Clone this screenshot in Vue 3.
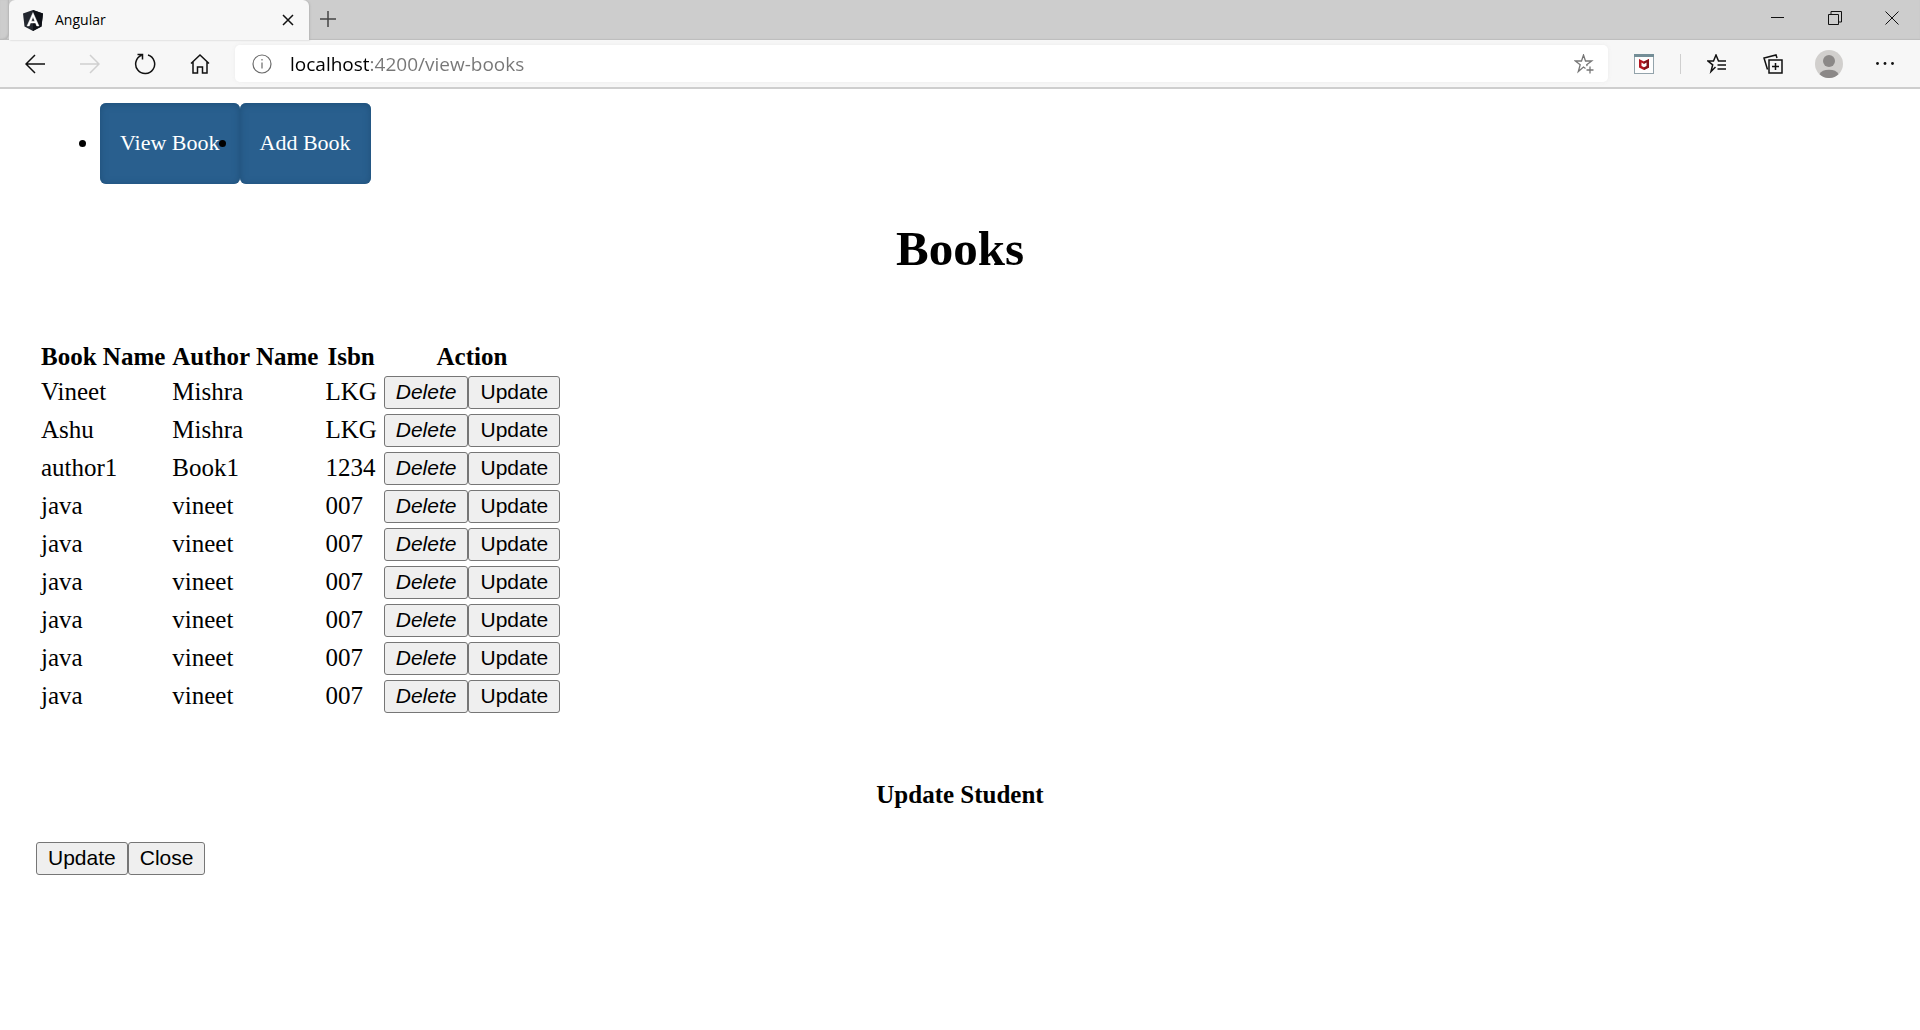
<script setup>
import { ref } from 'vue'

const address = ref('localhost:4200/view-books')

const books = ref([
  { name: 'Vineet', author: 'Mishra', isbn: 'LKG' },
  { name: 'Ashu', author: 'Mishra', isbn: 'LKG' },
  { name: 'author1', author: 'Book1', isbn: '1234' },
  { name: 'java', author: 'vineet', isbn: '007' },
  { name: 'java', author: 'vineet', isbn: '007' },
  { name: 'java', author: 'vineet', isbn: '007' },
  { name: 'java', author: 'vineet', isbn: '007' },
  { name: 'java', author: 'vineet', isbn: '007' },
  { name: 'java', author: 'vineet', isbn: '007' },
])
</script>

<template>
  <div class="window">
    <header class="chrome">
      <div class="tab-strip">
        <div class="tab-edge"></div>
        <div class="tab">
          <svg class="favicon" width="20" height="21" viewBox="0 0 20 21">
            <path d="M10 0 0 3.500 1.500 16.500 10 21l8.500-4.500L20 3.500z" fill="#23272f" />
            <path d="M10 0v21l8.500-4.500L20 3.500z" fill="#0d1016" />
            <path d="M10 2.500 4 16h2.300l1.200-3h5l1.200 3H16zM10 7l1.700 4.200H8.300z" fill="#fff" stroke="#fff" stroke-width=".4" fill-rule="evenodd" />
          </svg>
          <span class="tab-title">Angular</span>
          <button class="tab-close" aria-label="Close tab">
            <svg width="12" height="12" viewBox="0 0 12 12"><path d="M1 1l10 10M11 1 1 11" /></svg>
          </button>
        </div>
        <button class="new-tab" aria-label="New tab">
          <svg width="16" height="16" viewBox="0 0 16 16"><path d="M8 0v16M0 8h16" /></svg>
        </button>
        <div class="window-controls">
          <button aria-label="Minimize">
            <svg width="14" height="14" viewBox="0 0 14 14"><path d="M0 6.500h13" /></svg>
          </button>
          <button aria-label="Restore">
            <svg width="14" height="14" viewBox="0 0 14 14"><path d="M.5 3.500h10v10H.5zM3 3.500V.5h10.500v10.500H11" /></svg>
          </button>
          <button aria-label="Close">
            <svg width="14" height="14" viewBox="0 0 14 14"><path d="M.5.5l13 13M13.500.5l-13 13" /></svg>
          </button>
        </div>
      </div>

      <div class="toolbar">
        <button class="tool" aria-label="Back">
          <svg width="20" height="20" viewBox="0 0 20 20"><path d="M20 10H1M10 1l-9 9 9 9" /></svg>
        </button>
        <button class="tool" aria-label="Forward" disabled>
          <svg width="20" height="20" viewBox="0 0 20 20"><path d="M0 10h19M10 1l9 9-9 9" /></svg>
        </button>
        <button class="tool" aria-label="Refresh">
          <svg width="22" height="22" viewBox="0 0 22 22"><path d="M14 2a9.500 9.500 0 1 1-6.500.3M3.500 1.500h5v5" /></svg>
        </button>
        <button class="tool" aria-label="Home">
          <svg width="20" height="22" viewBox="0 0 20 22"><path d="M1 10.500 10 2l9 8.500M3 9v11h4.500v-6h5v6H17V9" /></svg>
        </button>
        <div class="address">
          <svg class="info" width="20" height="20" viewBox="0 0 20 20">
            <circle cx="10" cy="10" r="9" />
            <path d="M10 8.500v6M10 5v1.600" />
          </svg>
          <input v-model="address" class="url" type="text" aria-label="Address" spellcheck="false" />
          <button class="add-favorite" aria-label="Add to favorites">
            <svg width="20" height="20" viewBox="0 0 20 20">
              <path d="M11.500 14.500 9.500 13l-5.200 4.500 1.900-6.800L1.300 7h6.200l2-6 2 6h6.200l-5 3.700.4 1.500M16 12.500v7M12.500 16h7" />
            </svg>
          </button>
        </div>
        <button class="tool" aria-label="McAfee WebAdvisor">
          <svg width="20" height="20" viewBox="0 0 20 20">
            <rect x=".5" y=".5" width="19" height="19" fill="#fdfdfd" stroke="#93a3ab" stroke-width="1" />
            <rect width="20" height="3" fill="#748e97" stroke="none" />
            <path d="M5 5l5 2.500L15 5v8.500L10 16l-5-2.500z" fill="#b3151f" stroke="none" />
            <path d="M10 7.500 15 5v8.500L10 16z" fill="#85131b" stroke="none" />
            <path d="M7.500 8.500l2.500 1.500 2.500-1.500v3.500L10 13.300 7.500 12z" fill="#fff" stroke="none" />
          </svg>
        </button>
        <span class="separator"></span>
        <button class="tool" aria-label="Favorites">
          <svg width="20" height="20" viewBox="0 0 20 20">
            <path d="M8.500 13 4 17.500l1.700-6.700L1 7h5.500L9 1l2.500 6H19M10.500 11H19M10.500 15H19" />
          </svg>
        </button>
        <button class="tool" aria-label="Collections">
          <svg width="20" height="20" viewBox="0 0 20 20">
            <path d="M6 6h13v13H6zM12.500 9v7M9 12.500h7M4.500 15.500 1 4l12-3 1 3" />
          </svg>
        </button>
        <button class="tool" aria-label="Profile">
          <svg width="28" height="28" viewBox="0 0 28 28">
            <circle cx="14" cy="14" r="14" fill="#d1cfcd" stroke="none" />
            <circle cx="14" cy="11" r="6" fill="#8b8887" stroke="none" />
            <path d="M4.500 24.300a10 6.500 0 0 1 19 0A14 14 0 0 1 4.500 24.300z" fill="#8b8887" stroke="none" />
          </svg>
        </button>
        <button class="tool" aria-label="Settings and more">
          <svg width="20" height="20" viewBox="0 0 20 20">
            <g fill="#111" stroke="none">
              <circle cx="2.500" cy="9.500" r="1.400" /><circle cx="10" cy="9.500" r="1.400" /><circle cx="17.500" cy="9.500" r="1.400" />
            </g>
          </svg>
        </button>
      </div>
    </header>

    <main class="page">
      <nav>
        <ul class="menu">
          <li><a href="#view-books">View Book</a></li>
          <li><a href="#add-book">Add Book</a></li>
        </ul>
      </nav>

      <h1>Books</h1>

      <table>
        <thead>
          <tr>
            <th>Book Name</th>
            <th>Author Name</th>
            <th>Isbn</th>
            <th>Action</th>
          </tr>
        </thead>
        <tbody>
          <tr v-for="(book, index) in books" :key="index">
            <td>{{ book.name }}</td>
            <td>{{ book.author }}</td>
            <td>{{ book.isbn }}</td>
            <td class="action-cell">
              <div class="actions">
                <button class="btn delete">Delete</button>
                <button class="btn">Update</button>
              </div>
            </td>
          </tr>
        </tbody>
      </table>

      <section class="update">
        <h2>Update Student</h2>
        <div class="actions">
          <button class="btn">Update</button>
          <button class="btn">Close</button>
        </div>
      </section>
    </main>
  </div>
</template>

<style>
body {
  margin: 0;
  background: #fff;
}
</style>

<style scoped>
.window {
  color: #000;
  font-family: "Liberation Serif", "Times New Roman", serif;
  font-size: 25px;
}

button {
  font-family: inherit;
  margin: 0;
}

.chrome {
  font-family: "Open Sans", "Noto Sans", sans-serif;
  background: #f7f7f7;
  border-bottom: 2px solid #cecece;
}

.chrome button {
  display: flex;
  align-items: center;
  justify-content: center;
  padding: 0;
  border: 0;
  background: none;
}

.chrome svg {
  fill: none;
  stroke: #111;
  stroke-width: 1.5;
  flex: none;
}

.tab-strip {
  display: flex;
  height: 40px;
  background: #cdcdcd;
  box-shadow: inset 0 -1px 1px #bdbdbd;
}

.tab-edge {
  width: 9px;
  background: #cdcdcd;
  border-bottom-right-radius: 6px;
  box-shadow: inset -1px -1px 2px #b5b5b5;
}

.tab {
  display: flex;
  align-items: center;
  box-sizing: border-box;
  width: 300px;
  padding: 0 15px 0 14px;
  background: #f7f7f7;
  border-radius: 6px 6px 0 0;
  box-shadow: 1px 0 2px #b5b5b5;
}

.chrome .favicon {
  stroke: none;
}

.tab-title {
  flex: 1;
  margin-left: 12px;
  font-size: 14px;
  line-height: 20px;
}

.new-tab {
  width: 38px;
  height: 38px;
}

.chrome .new-tab svg {
  stroke: #444;
}

.window-controls {
  display: flex;
  margin-left: auto;
}

.window-controls button {
  width: 57px;
  height: 36px;
}

.chrome .window-controls svg {
  stroke-width: 1;
}

.toolbar {
  display: flex;
  align-items: center;
  height: 47px;
  padding: 0 7px;
}

.tool {
  width: 55px;
  height: 36px;
}

.address ~ .tool {
  width: 56px;
}

.chrome .tool:disabled svg {
  stroke: #d0d0d0;
}

.address {
  flex: 1;
  display: flex;
  align-items: center;
  height: 37px;
  margin: 0 8px;
  padding: 0 14px 0 17px;
  background: #fff;
  border-radius: 5px;
  box-shadow: 0 0 4px #ececec;
}

.chrome .info {
  stroke: #6b6b6b;
  stroke-width: 1.2;
}

.url {
  flex: 1;
  margin: 0 0 0 18px;
  padding: 0;
  border: 0;
  outline: 0;
  font-family: inherit;
  font-size: 19px;
  line-height: 30px;
  color: transparent;
  background: linear-gradient(to right, #000 79px, #767676 79px);
  -webkit-background-clip: text;
  background-clip: text;
}

.chrome .add-favorite svg {
  stroke: #777;
  stroke-width: 1.3;
}

.separator {
  width: 1px;
  height: 20px;
  margin: 0 8px;
  background: #cfcfcf;
}

.page {
  padding: 14px 36px;
}

.menu {
  display: flex;
  margin: 0;
  padding: 0 0 0 64px;
}

.menu a {
  display: block;
  padding: 0 20px 2px;
  font-size: 22px;
  line-height: 79px;
  color: #fff;
  text-decoration: none;
  background: #295f8e;
  border-radius: 6px;
  box-shadow: inset 0 1px 7px #1f4f78;
}

h1 {
  margin: 37px 0 63px;
  font-size: 49px;
  line-height: 56px;
  text-align: center;
}

table {
  border-spacing: 3px;
}

th,
td {
  padding: 0 2px 2px;
  line-height: 28px;
}

th {
  padding-bottom: 1px;
}

td.action-cell {
  padding: 1px 2px;
}

.actions {
  display: flex;
}

.btn {
  box-sizing: border-box;
  height: 33px;
  padding: 0 11px 2px;
  border: 1px solid #767676;
  border-radius: 3px;
  background: #efefef;
  color: #000;
  font-family: "Liberation Sans", Arial, sans-serif;
  font-size: 21px;
  line-height: 24px;
}

.delete {
  font-style: italic;
}

.update h2 {
  margin: 63px 0 32px;
  font-size: 25px;
  line-height: 30px;
  text-align: center;
}
</style>
